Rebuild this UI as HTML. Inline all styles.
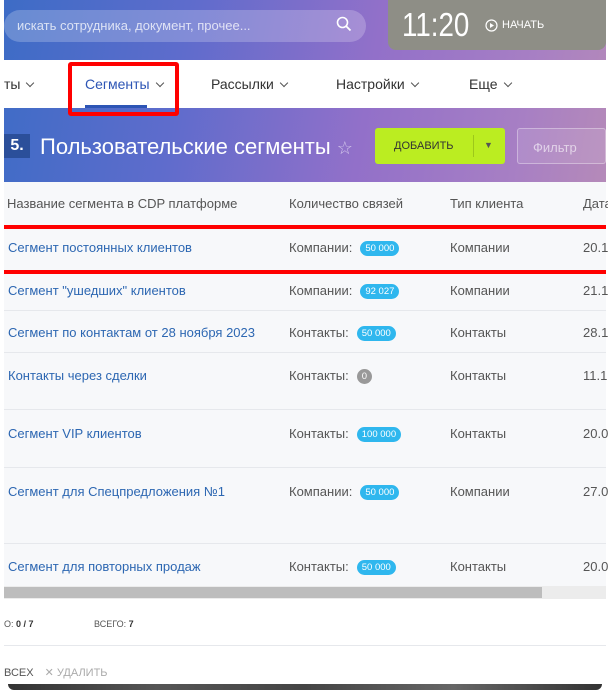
<!DOCTYPE html>
<html><head><meta charset="utf-8"><style>
*{margin:0;padding:0;box-sizing:border-box}
body{width:608px;height:696px;overflow:hidden;background:#fff;font-family:"Liberation Sans",sans-serif;position:relative}
.a{position:absolute;white-space:nowrap}
.bg{left:4px;top:0;width:602px;height:182px;background:linear-gradient(100deg,#3d6cc6 0%,#5f6ccc 30%,#9270c9 60%,#a77fc4 85%,#b58ab9 100%)}
.nav{left:4px;top:60px;width:602px;height:48px;background:#fff}
.tbl{left:4px;top:182px;width:602px;height:404px;background:#f7f8fa}
.ln{position:absolute;left:4px;width:602px;height:1px;background:#e6e8ec}
.nm{left:8px;font-size:13px;color:#2d67b2}
.c2{left:289px;font-size:13px;color:#555}
.c3{left:450px;font-size:13px;color:#555}
.c4{left:583px;font-size:13px;color:#555}
.b{display:inline-block;background:#2fb7ee;color:#fff;font-size:9.5px;border-radius:8px;padding:2px 5px;margin-left:8px;vertical-align:1px}
.red{position:absolute;left:4px;width:602px;height:4px;background:#f00}
.ch{display:inline-block;width:6px;height:6px;border-right:1.3px solid #555;border-bottom:1.3px solid #555;transform:rotate(45deg);margin-left:7px;vertical-align:3px}
</style></head><body>
<div class="a bg"></div>
<div class="a" style="left:4px;top:10px;width:362px;height:32px;border-radius:16px;background:rgba(255,255,255,0.22)"></div>
<div class="a" style="left:17px;top:18px;font-size:13px;color:rgba(255,255,255,0.75)">искать сотрудника, документ, прочее...</div>
<svg class="a" style="left:336px;top:16px" width="16" height="16" viewBox="0 0 16 16"><circle cx="6.5" cy="6.5" r="5" fill="none" stroke="#fff" stroke-width="1.6"/><path d="M10 10l4.5 4.5" stroke="#fff" stroke-width="1.8"/></svg>
<div class="a" style="left:388px;top:0;width:218px;height:50px;background:#8e8e86;border-radius:0 0 8px 8px"></div>
<div class="a" style="left:402px;top:6px;font-size:33px;color:#fff;transform:scaleX(0.84);transform-origin:left top">11:20</div>
<svg class="a" style="left:485px;top:19px" width="13" height="13" viewBox="0 0 13 13"><circle cx="6.5" cy="6.5" r="5.5" fill="none" stroke="#fff" stroke-width="1.2"/><path d="M5 4l4 2.5-4 2.5z" fill="#fff"/></svg>
<div class="a" style="left:502px;top:19px;font-size:11px;color:#fff">НАЧАТЬ</div>
<div class="a nav"></div>
<div class="a" style="left:4px;top:76px;font-size:14px;color:#333">ты<span class="ch"></span></div>
<div class="a" style="left:85px;top:76px;font-size:14px;color:#2d55b5">Сегменты<span class="ch"></span></div>
<div class="a" style="left:85px;top:105px;width:62px;height:3px;background:#2d55b5"></div>
<div class="a" style="left:211px;top:76px;font-size:14px;color:#333">Рассылки<span class="ch"></span></div>
<div class="a" style="left:336px;top:76px;font-size:14px;color:#333">Настройки<span class="ch"></span></div>
<div class="a" style="left:469px;top:76px;font-size:14px;color:#333">Еще<span class="ch"></span></div>
<div class="a" style="left:68px;top:62px;width:111px;height:54px;border:4px solid #f00;border-radius:3px"></div>
<div class="a" style="left:4px;top:134px;width:26px;height:24px;background:#2b4f9a;color:#fff;font-weight:bold;font-size:16px;text-align:center;line-height:24px">5.</div>
<div class="a" style="left:40px;top:134px;font-size:22px;color:#fff">Пользовательские сегменты <span style="color:rgba(255,255,255,0.6);font-size:18px">☆</span></div>
<div class="a" style="left:375px;top:128px;width:130px;height:36px;background:#bbed21;border-radius:3px"></div>
<div class="a" style="left:394px;top:140px;font-size:11px;color:#333">ДОБАВИТЬ</div>
<div class="a" style="left:473px;top:135px;width:1px;height:22px;background:#9dc81a"></div>
<div class="a" style="left:484px;top:140px;font-size:9px;color:#555">▼</div>
<div class="a" style="left:517px;top:128px;width:89px;height:36px;border:1px solid rgba(255,255,255,0.35);border-radius:3px;background:rgba(255,255,255,0.1)"></div>
<div class="a" style="left:533px;top:140px;font-size:13px;color:rgba(255,255,255,0.6)">Фильтр</div>
<div class="a tbl"></div>
<div class="a" style="left:7px;top:196px;font-size:13px;color:#555">Название сегмента в CDP платформе</div>
<div class="a c2" style="top:196px">Количество связей</div>
<div class="a c3" style="top:196px">Тип клиента</div>
<div class="a c4" style="top:196px">Дата</div>
<div class="red" style="top:225px"></div>
<div class="red" style="top:270px"></div>
<div class="ln" style="top:310px"></div><div class="ln" style="top:352px"></div><div class="ln" style="top:409px"></div><div class="ln" style="top:467px"></div><div class="ln" style="top:543px"></div>
<div class="a nm" style="top:240px">Сегмент постоянных клиентов</div><div class="a c2" style="top:240px">Компании:<span class="b">50 000</span></div><div class="a c3" style="top:240px">Компании</div><div class="a c4" style="top:240px">20.1</div>
<div class="a nm" style="top:283px">Сегмент "ушедших" клиентов</div><div class="a c2" style="top:283px">Компании:<span class="b">92 027</span></div><div class="a c3" style="top:283px">Компании</div><div class="a c4" style="top:283px">21.1</div>
<div class="a nm" style="top:325px">Сегмент по контактам от 28 ноября 2023</div><div class="a c2" style="top:325px">Контакты:<span class="b">50 000</span></div><div class="a c3" style="top:325px">Контакты</div><div class="a c4" style="top:325px">28.1</div>
<div class="a nm" style="top:368px">Контакты через сделки</div><div class="a c2" style="top:368px">Контакты:<span class="b" style="background:#999">0</span></div><div class="a c3" style="top:368px">Контакты</div><div class="a c4" style="top:368px">11.1</div>
<div class="a nm" style="top:426px">Сегмент VIP клиентов</div><div class="a c2" style="top:426px">Контакты:<span class="b">100 000</span></div><div class="a c3" style="top:426px">Контакты</div><div class="a c4" style="top:426px">20.0</div>
<div class="a nm" style="top:484px">Сегмент для Спецпредложения №1</div><div class="a c2" style="top:484px">Компании:<span class="b">50 000</span></div><div class="a c3" style="top:484px">Компании</div><div class="a c4" style="top:484px">27.0</div>
<div class="a nm" style="top:559px">Сегмент для повторных продаж</div><div class="a c2" style="top:559px">Контакты:<span class="b">50 000</span></div><div class="a c3" style="top:559px">Контакты</div><div class="a c4" style="top:559px">20.0</div>
<div class="a" style="left:4px;top:586px;width:602px;height:13px;background:#ececec"></div>
<div class="a" style="left:4px;top:587px;width:538px;height:11px;background:#bdbdbd"></div>
<div class="a" style="left:4px;top:619px;font-size:9px;color:#555">О: <b style="color:#333">0 / 7</b></div>
<div class="a" style="left:94px;top:619px;font-size:9px;color:#555">ВСЕГО: <b style="color:#333">7</b></div>
<div class="ln" style="top:645px"></div>
<div class="a" style="left:4px;top:666px;font-size:11px;color:#555">ВСЕХ <span style="color:#aaa;margin-left:8px">✕ УДАЛИТЬ</span></div>
<div class="a" style="left:8px;top:684px;width:594px;height:6px;background:linear-gradient(90deg,#333,#555,#444,#666,#333);border-radius:0 0 6px 6px"></div>
</body></html>
